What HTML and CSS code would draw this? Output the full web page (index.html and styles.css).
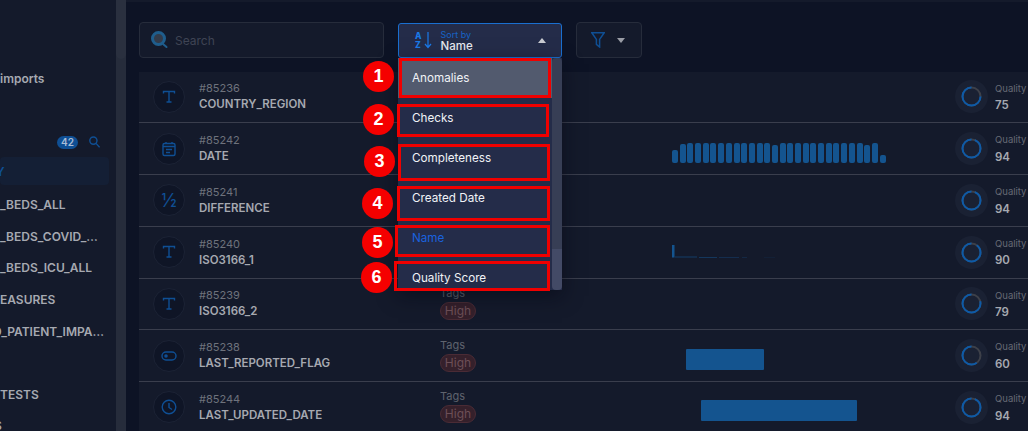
FILE: index.html
```html
<!DOCTYPE html>
<html lang="en">

<head>
  <meta charset="UTF-8" />
  <title>Fields</title>
  <link rel="stylesheet" href="styles.css">
</head>

<body>
  <aside class="sidebar">
    <div class="side-title">imports</div>
    <div class="side-head">
      <span class="count">42</span>
      <svg class="side-search" width="11" height="12" viewBox="0 0 11 12"><circle cx="4.4" cy="4.6" r="3.6" /><path d="M7 7.4l3.6 4" /></svg>
    </div>
    <ul class="side-list">
      <li class="side-item selected"><span class="cut-y">Y</span></li>
      <li class="side-item">_BEDS_ALL</li>
      <li class="side-item">_BEDS_COVID_…</li>
      <li class="side-item">_BEDS_ICU_ALL</li>
      <li class="side-item">EASURES</li>
      <li class="side-item"><span class="cut-d">D_PATIENT_IMPA…</span></li>
      <li class="side-item"></li>
      <li class="side-item">TESTS</li>
      <li class="side-item"><span class="cut-s">S</span></li>
    </ul>
  </aside>
  <div class="scrolltrack"><div class="scrollthumb"></div></div>

  <main class="main">
    <div class="toolbar">
      <div class="search">
        <svg width="19" height="20" viewBox="0 0 19 20"><circle class="search-glass" cx="8.5" cy="8.5" r="6" /><path class="search-handle" d="M13 14l3.5 3" /></svg>
        <span>Search</span>
      </div>

      <div class="sort">
        <button class="sort-btn">
          <span class="az"><b>A</b><b>Z</b></span>
          <svg class="az-arrow" width="8" height="17" viewBox="0 0 8 17"><path d="M4 0v15M1 12l3 3.5L7 12" /></svg>
          <span class="sort-label"><small>Sort by</small>Name</span>
          <span class="caret up"></span>
        </button>
        <div class="dropdown">
          <ul class="options">
            <li class="active">Anomalies</li>
            <li>Checks</li>
            <li>Completeness</li>
            <li>Created Date</li>
            <li class="current">Name</li>
            <li>Quality Score</li>
          </ul>
          <div class="dd-scroll"><span class="dd-track"></span><span class="dd-thumb"></span></div>
        </div>
      </div>

      <button class="filter-btn">
        <svg width="14" height="16" viewBox="0 0 14 16"><path d="M.8.8h12.4L8.6 7.4v7.6L5.4 12.4v-5z" /></svg>
        <span class="caret"></span>
      </button>
    </div>

    <div class="rows">
      <div class="row">
        <div class="type"><svg width="16" height="16" viewBox="0 0 16 16"><path d="M2.5 4.5v-2h11v2M8 2.5V13M5.5 13h5" /></svg></div>
        <div class="name"><span>#85236</span><b>COUNTRY_REGION</b></div>
        <div class="tags"></div>
        <div class="chart"></div>
        <div class="ring"><svg width="33" height="33" viewBox="0 0 33 33"><circle class="ring-bg" cx="16.5" cy="16.5" r="9" /><circle class="ring-val" cx="16.5" cy="16.5" r="9" pathLength="100" stroke-dasharray="75 100" /></svg></div>
        <div class="score"><span>Quality</span><b>75</b></div>
      </div>

      <div class="row">
        <div class="type"><svg width="16" height="16" viewBox="0 0 16 16"><rect x="2" y="2.5" width="12" height="12" rx="1.5" /><path d="M5 1v2M11 1v2M2 5.5h12M5 8.5h6M5 11.5h4" /></svg></div>
        <div class="name"><span>#85242</span><b>DATE</b></div>
        <div class="tags"></div>
        <div class="chart bars">
          <i class="h13"></i><i class="h19"></i><i></i><i></i><i></i><i></i><i></i><i></i><i></i><i></i><i></i><i></i><i></i><i class="h18"></i><i></i><i></i><i></i><i></i><i></i><i></i><i></i><i></i><i></i><i></i><i></i><i class="h18"></i><i></i><i class="h8"></i>
        </div>
        <div class="ring"><svg width="33" height="33" viewBox="0 0 33 33"><circle class="ring-bg" cx="16.5" cy="16.5" r="9" /><circle class="ring-val" cx="16.5" cy="16.5" r="9" pathLength="100" stroke-dasharray="94 100" /></svg></div>
        <div class="score"><span>Quality</span><b>94</b></div>
      </div>

      <div class="row">
        <div class="type half">½</div>
        <div class="name"><span>#85241</span><b>DIFFERENCE</b></div>
        <div class="tags"></div>
        <div class="chart"></div>
        <div class="ring"><svg width="33" height="33" viewBox="0 0 33 33"><circle class="ring-bg" cx="16.5" cy="16.5" r="9" /><circle class="ring-val" cx="16.5" cy="16.5" r="9" pathLength="100" stroke-dasharray="94 100" /></svg></div>
        <div class="score"><span>Quality</span><b>94</b></div>
      </div>

      <div class="row">
        <div class="type"><svg width="16" height="16" viewBox="0 0 16 16"><path d="M2.5 4.5v-2h11v2M8 2.5V13M5.5 13h5" /></svg></div>
        <div class="name"><span>#85240</span><b>ISO3166_1</b></div>
        <div class="tags"></div>
        <div class="chart">
          <svg class="mini" width="110" height="13" viewBox="0 0 110 13"><rect x="0" y="0" width="2.5" height="12.5" /><rect x="3" y="11.5" width="22" height="1" opacity=".6" /><rect x="27" y="12" width="18" height="1" opacity=".5" /><rect x="47" y="12" width="20" height="1" opacity=".35" /><rect x="70" y="12" width="5" height="1" opacity=".25" /><rect x="92" y="12" width="11" height="1" opacity=".12" /></svg>
        </div>
        <div class="ring"><svg width="33" height="33" viewBox="0 0 33 33"><circle class="ring-bg" cx="16.5" cy="16.5" r="9" /><circle class="ring-val" cx="16.5" cy="16.5" r="9" pathLength="100" stroke-dasharray="90 100" /></svg></div>
        <div class="score"><span>Quality</span><b>90</b></div>
      </div>

      <div class="row">
        <div class="type"><svg width="16" height="16" viewBox="0 0 16 16"><path d="M2.5 4.5v-2h11v2M8 2.5V13M5.5 13h5" /></svg></div>
        <div class="name"><span>#85239</span><b>ISO3166_2</b></div>
        <div class="tags"><span>Tags</span><em>High</em></div>
        <div class="chart"></div>
        <div class="ring"><svg width="33" height="33" viewBox="0 0 33 33"><circle class="ring-bg" cx="16.5" cy="16.5" r="9" /><circle class="ring-val" cx="16.5" cy="16.5" r="9" pathLength="100" stroke-dasharray="79 100" /></svg></div>
        <div class="score"><span>Quality</span><b>79</b></div>
      </div>

      <div class="row">
        <div class="type"><svg width="16" height="16" viewBox="0 0 16 16"><rect x="1" y="4" width="14" height="8" rx="4" /><circle class="dot" cx="5" cy="8" r="1.8" /></svg></div>
        <div class="name"><span>#85238</span><b>LAST_REPORTED_FLAG</b></div>
        <div class="tags"><span>Tags</span><em>High</em></div>
        <div class="chart"><div class="block block-flag"></div></div>
        <div class="ring"><svg width="33" height="33" viewBox="0 0 33 33"><circle class="ring-bg" cx="16.5" cy="16.5" r="9" /><circle class="ring-val" cx="16.5" cy="16.5" r="9" pathLength="100" stroke-dasharray="60 100" /></svg></div>
        <div class="score"><span>Quality</span><b>60</b></div>
      </div>

      <div class="row">
        <div class="type"><svg width="16" height="16" viewBox="0 0 16 16"><circle cx="8" cy="8" r="6.8" /><path d="M8 4v4.5l3 2" /></svg></div>
        <div class="name"><span>#85244</span><b>LAST_UPDATED_DATE</b></div>
        <div class="tags"><span>Tags</span><em>High</em></div>
        <div class="chart"><div class="block block-date"></div></div>
        <div class="ring"><svg width="33" height="33" viewBox="0 0 33 33"><circle class="ring-bg" cx="16.5" cy="16.5" r="9" /><circle class="ring-val" cx="16.5" cy="16.5" r="9" pathLength="100" stroke-dasharray="94 100" /></svg></div>
        <div class="score"><span>Quality</span><b>94</b></div>
      </div>
    </div>
  </main>

  <!-- red callouts drawn on top of the screenshot -->
  <div class="mark mark-1"></div>
  <div class="mark mark-2"></div>
  <div class="mark mark-3"></div>
  <div class="mark mark-4"></div>
  <div class="mark mark-5"></div>
  <div class="mark mark-6"></div>
  <div class="pin pin-1">1</div>
  <div class="pin pin-2">2</div>
  <div class="pin pin-3">3</div>
  <div class="pin pin-4">4</div>
  <div class="pin pin-5">5</div>
  <div class="pin pin-6">6</div>
</body>

</html>
```
FILE: styles.css
```css
* {
  box-sizing: border-box;
}

html,
body {
  height: 431px;
}

body {
  margin: 0;
  display: flex;
  overflow: hidden;
  position: relative;
  width: 1028px;
  background-color: #0d1325;
  font-family: Inter, "Liberation Sans", sans-serif;
  font-size: 11px;
  color: #a6a9b1;
}

button {
  font-family: inherit;
  cursor: pointer;
}

/* sidebar */
.sidebar {
  width: 116px;
  flex-shrink: 0;
  background-color: #141a2b;
  overflow: hidden;
}

.side-title {
  margin-top: 71px;
  font-size: 12px;
  font-weight: 600;
  line-height: 16px;
}

.side-head {
  display: flex;
  justify-content: flex-end;
  align-items: center;
  gap: 11px;
  height: 14px;
  margin-top: 48px;
  padding-right: 16px;
}

.count {
  width: 21px;
  height: 13px;
  border-radius: 7px;
  background-color: #0f4f94;
  color: #a9bdd6;
  font-size: 10px;
  font-weight: 600;
  line-height: 13px;
  text-align: center;
}

.side-search {
  fill: none;
  stroke: #0f4f94;
  stroke-width: 1.4;
}

.side-list {
  list-style: none;
  margin: 8px 0 0;
  padding: 0;
}

.side-item {
  height: 31.6px;
  display: flex;
  align-items: center;
  white-space: nowrap;
  font-size: 12px;
  font-weight: 600;
}

.side-item.selected {
  height: 28px;
  margin: 2px 7px 4px 0;
  border-radius: 4px;
  background-color: #141f35;
  color: #0f4f94;
}

.cut-y {
  margin-left: -4px;
}

.cut-d {
  margin-left: -7px;
}

.cut-s {
  margin-left: -6px;
}

.scrolltrack {
  width: 10px;
  flex-shrink: 0;
  background-color: #262c3b;
}

.scrollthumb {
  height: 59px;
  border-radius: 0 0 5px 5px;
  background-color: #2a303f;
}

/* main */
.main {
  flex: 1;
  min-width: 0;
  padding: 22px 0 0 13px;
  border-top: 2px solid #141a2b;
  overflow: hidden;
}

.toolbar {
  display: flex;
  gap: 14px;
  margin-top: -2px;
  height: 36px;
}

.search {
  width: 245px;
  display: flex;
  align-items: center;
  gap: 6px;
  padding-left: 10px;
  border: 1px solid #262c3b;
  border-radius: 4px;
  background-color: #141a2b;
  color: #3f4454;
  font-size: 12px;
}

.search-glass {
  fill: #333b4a;
  stroke: #1f5d8c;
  stroke-width: 3;
}

.search-handle {
  fill: none;
  stroke: #1f5d8c;
  stroke-width: 2;
  stroke-linecap: round;
}

.sort {
  position: relative;
  width: 164px;
}

.sort-btn {
  width: 100%;
  height: 35px;
  margin-top: 1px;
  display: flex;
  align-items: center;
  padding: 0 15px 0 16px;
  border: 1px solid #1a6fd0;
  border-radius: 3px;
  background-color: #242c49;
  color: #e6e8ee;
  text-align: left;
}

.az {
  display: flex;
  flex-direction: column;
  font-size: 8.5px;
  line-height: 9px;
  color: #1a7ae8;
}

.az b {
  font-weight: 800;
}

.az-arrow {
  margin-left: 2px;
  fill: none;
  stroke: #1a7ae8;
  stroke-width: 1.2;
}

.sort-label {
  flex: 1;
  margin-left: 9px;
  font-size: 11.5px;
  font-weight: 500;
  line-height: 12px;
}

.sort-label small {
  display: block;
  font-size: 9px;
  font-weight: 400;
  line-height: 10px;
  color: #1763c6;
}

.caret {
  width: 0;
  height: 0;
  border-left: 4px solid transparent;
  border-right: 4px solid transparent;
  border-top: 5px solid #9a9da6;
}

.caret.up {
  border-left-width: 4.5px;
  border-right-width: 4.5px;
  border-top: 0;
  border-bottom: 5px solid #c9cbd1;
}

.dropdown {
  position: absolute;
  top: 36px;
  left: 0;
  width: 164px;
  height: 232px;
  display: flex;
  background-color: #242c49;
  box-shadow: 0 6px 18px rgba(5, 8, 20, 0.55);
  z-index: 2;
}

.options {
  flex: 1;
  list-style: none;
  margin: 0;
  padding: 0;
}

.options li {
  height: 40px;
  padding-left: 14px;
  color: #f0f2f6;
  font-size: 11.7px;
  line-height: 40px;
}

.options .active {
  background-color: #525a6e;
}

.options .current {
  color: #1a62de;
}

.dd-scroll {
  width: 10px;
  display: flex;
  flex-direction: column;
}

.dd-track {
  flex: 1;
  border-radius: 4px 4px 0 0;
  background-color: #373e55;
}

.dd-thumb {
  height: 41px;
  border-radius: 0 0 4px 4px;
  background-color: #434a66;
}

.filter-btn {
  width: 66px;
  display: flex;
  align-items: center;
  gap: 12px;
  padding: 0 0 0 14px;
  border: 1px solid #262c3b;
  border-radius: 4px;
  background-color: #141a2b;
}

.filter-btn svg {
  fill: none;
  stroke: #0f4f94;
  stroke-width: 1.5;
}

/* field rows */
.rows {
  margin-top: 13.5px;
  width: 1000px;
}

.row {
  height: 51.75px;
  display: flex;
  align-items: center;
  padding-left: 14px;
  border-bottom: 1px solid #3a3e4d;
  background-color: #141a2b;
}

.type {
  width: 32px;
  height: 32px;
  flex-shrink: 0;
  display: flex;
  align-items: center;
  justify-content: center;
  border: 1px solid #1c2335;
  border-radius: 50%;
  background-color: #0f1526;
}

.type svg {
  fill: none;
  stroke: #0f4f94;
  stroke-width: 1.4;
}

.type .dot {
  fill: #0f4f94;
  stroke: none;
}

.type.half {
  color: #0f4f94;
  font-size: 18px;
}

.name {
  width: 241px;
  margin-left: 14px;
  flex-shrink: 0;
}

.name span,
.name b,
.score span,
.score b,
.tags span {
  display: block;
}

.name span {
  color: #6e727c;
  font-size: 11px;
  line-height: 15px;
}

.name b {
  font-size: 11.5px;
  font-weight: 600;
  line-height: 16px;
}

.tags {
  width: 232px;
  margin-bottom: 2px;
  flex-shrink: 0;
  color: #5f636e;
  font-size: 11px;
  line-height: 15px;
}

.tags em {
  display: block;
  width: 36px;
  height: 18px;
  margin-top: 1px;
  border: 1px solid #4a2b35;
  border-radius: 9px;
  background-color: #35202b;
  color: #6d4f57;
  font-size: 12px;
  font-style: normal;
  line-height: 16px;
  text-align: center;
}

.chart {
  width: 283px;
  height: 21px;
  flex-shrink: 0;
  margin-top: 7px;
}

.bars {
  display: flex;
  align-items: flex-end;
  gap: 1.7px;
}

.bars i {
  width: 6px;
  height: 20px;
  border-radius: 2px;
  background-color: #14548f;
}

.bars .h19 {
  height: 19px;
}

.bars .h18 {
  height: 18px;
}

.bars .h13 {
  height: 13px;
}

.bars .h8 {
  height: 8px;
}

.mini {
  display: block;
  fill: #14548f;
}

.block {
  height: 21px;
  border-radius: 1px;
  background-color: #14548f;
}

.block-flag {
  width: 78px;
  margin-left: 14px;
}

.block-date {
  width: 156px;
  margin-left: 29px;
}

.ring {
  width: 33px;
  height: 33px;
  flex-shrink: 0;
  border-radius: 50%;
  background-color: #1a2133;
}

.ring svg {
  display: block;
  fill: none;
  stroke-width: 2;
  transform: rotate(-90deg) scaleY(-1);
}

.ring-bg {
  stroke: #3d4049;
}

.ring-val {
  stroke: #0d5aa7;
}

.score {
  margin-left: 7px;
  flex-shrink: 0;
}

.score span {
  color: #666a75;
  font-size: 9.5px;
  line-height: 16px;
}

.score b {
  margin-top: 0.5px;
  font-size: 11.5px;
  font-weight: 600;
  line-height: 16px;
}

/* callouts */
.mark {
  position: absolute;
  border: 3px solid #f00000;
  z-index: 3;
}

.mark-1 {
  left: 399px;
  top: 58px;
  width: 152px;
  height: 40px;
}

.mark-2 {
  left: 397px;
  top: 104px;
  width: 152px;
  height: 33px;
}

.mark-3 {
  left: 398px;
  top: 144px;
  width: 152px;
  height: 37px;
}

.mark-4 {
  left: 397px;
  top: 186px;
  width: 153px;
  height: 35px;
}

.mark-5 {
  left: 395px;
  top: 225px;
  width: 155px;
  height: 32px;
}

.mark-6 {
  left: 394px;
  top: 261px;
  width: 156px;
  height: 30px;
}

.pin {
  position: absolute;
  width: 31px;
  height: 31px;
  border-radius: 50%;
  background-color: #f50000;
  color: white;
  font-family: "Liberation Sans", Arial, sans-serif;
  font-size: 18px;
  font-weight: 700;
  line-height: 31px;
  text-align: center;
  z-index: 4;
}

.pin-1 {
  left: 363px;
  top: 61px;
}

.pin-2 {
  left: 363px;
  top: 104px;
}

.pin-3 {
  left: 364px;
  top: 146px;
}

.pin-4 {
  left: 362px;
  top: 188px;
}

.pin-5 {
  left: 362px;
  top: 227px;
}

.pin-6 {
  left: 361px;
  top: 262px;
}
```
